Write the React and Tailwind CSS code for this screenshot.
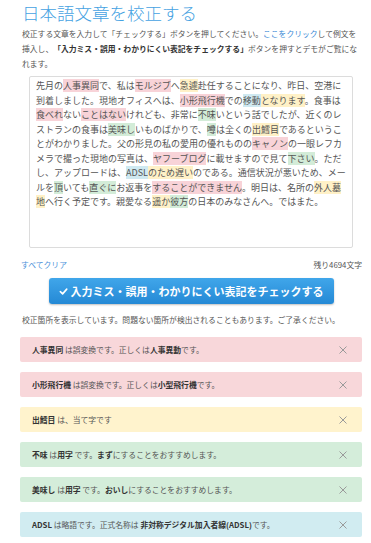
import React from "react";

const HL = {
  r: "bg-[#f8d3d8]",
  y: "bg-[#fff1c7]",
  g: "bg-[#d3ecd8]",
  b: "bg-[#cfe9f1]",
};

// sample text, one array per rendered line: [text, highlight?]
const lines = [
  [["先月の"], ["人事異同", "r"], ["で、私は"], ["モルジブ", "r"], ["へ"], ["急遽", "y"], ["赴任することになり、昨日、空港に"]],
  [["到着しました。現地オフィスへは、"], ["小形飛行機", "r"], ["での"], ["移動", "b"], ["となります", "y"], ["。食事は"]],
  [["食べれ", "r"], ["ない"], ["ことはない", "r"], ["けれども、非常に"], ["不味", "g"], ["いという話でしたが、近くのレ"]],
  [["ストランの食事は"], ["美味し", "g"], ["いものばかりで、"], ["噂", "g"], ["は全くの"], ["出鱈目", "y"], ["であるというこ"]],
  [["とがわかりました。父の形見の私の愛用の優れものの"], ["キャノン", "r"], ["の一眼レフカ"]],
  [["メラで撮った現地の写真は、"], ["ヤフーブログ", "r"], ["に載せますので見て"], ["下さい", "g"], ["。ただ"]],
  [["し、アップロードは、"], ["ADSL", "b"], ["のため遅い", "y"], ["のである。通信状況が悪いため、メー"]],
  [["ルを"], ["頂", "g"], ["いても"], ["直ぐに", "g"], ["お返事を"], ["することができません", "r"], ["。明日は、名所の"], ["外人墓", "y"]],
  [["地", "y"], ["へ行く予定です。親愛なる"], ["遥か", "y"], ["彼方", "g"], ["の日本のみなさんへ。ではまた。"]],
];

const alerts = [
  { c: "bg-[#f8d7da]", body: <><b className="text-[#333]">人事異同</b> は誤変換です。正しくは<b className="text-[#333]">人事異動</b>です。</> },
  { c: "bg-[#f8d7da]", body: <><b className="text-[#333]">小形飛行機</b> は誤変換です。正しくは<b className="text-[#333]">小型飛行機</b>です。</> },
  { c: "bg-[#fff3cd]", body: <><b className="text-[#333]">出鱈目</b> は、当て字です</> },
  { c: "bg-[#d4edda]", body: <><b className="text-[#333]">不味</b> は<b className="text-[#333]">用字</b> です。<b className="text-[#333]">まず</b>にすることをおすすめします。</> },
  { c: "bg-[#d4edda]", body: <><b className="text-[#333]">美味し</b> は<b className="text-[#333]">用字</b> です。<b className="text-[#333]">おいし</b>にすることをおすすめします。</> },
  { c: "bg-[#d1ecf1]", body: <><b className="text-[#333]">ADSL</b> は略語です。正式名称は <b className="text-[#333]">非対称デジタル加入者線(ADSL)</b>です。</> },
];

function CloseIcon() {
  return (
    <svg width="8" height="8" viewBox="0 0 8 8" className="shrink-0">
      <path d="M0.5 0.5 L7.5 7.5 M7.5 0.5 L0.5 7.5" stroke="#9a9a9a" strokeWidth="1" />
    </svg>
  );
}

export default function App() {
  return (
    <div
      className="w-[371px] min-h-[543px] bg-white pl-[20px] pr-[9px] text-[#555]"
      style={{ fontFamily: "'Noto Sans CJK JP', 'Noto Sans', sans-serif" }}
    >
      <h1 className="h-[26px] leading-[26px] text-[17.5px] font-light text-[#45a2e2] pl-[2px]">
        日本語文章を校正する
      </h1>

      <div className="text-[7.8px] leading-[15px] pl-[2px] text-[#555]">
        <div>
          校正する文章を入力して「チェックする」ボタンを押してください。
          <span className="text-[#3a8ad6]">ここをクリック</span>して例文を
        </div>
        <div>
          挿入し、<b className="text-[#333]">「入力ミス・誤用・わかりにくい表記をチェックする」</b>ボタンを押すとデモがご覧にな
        </div>
        <div>れます。</div>
      </div>

      <div className="mt-[5px] mx-[9px] h-[172px] border border-[#dcdcdc] rounded-[2px] pl-[6px] pt-[2px] text-[9px] leading-[14.5px] text-[#555]">
        {lines.map((line, i) => (
          <div key={i} className="whitespace-nowrap">
            {line.map(([t, h], j) =>
              h ? (
                <span key={j} className={HL[h]}>
                  {t}
                </span>
              ) : (
                <span key={j}>{t}</span>
              )
            )}
          </div>
        ))}
      </div>

      <div className="mt-[10px] flex justify-between text-[7.8px] leading-[14px] pl-[1px]">
        <span className="text-[#4a90d9]">すべてクリア</span>
        <span className="text-[#555]">残り4694文字</span>
      </div>

      <div className="mt-[6px] flex justify-center">
        <button className="w-[285px] h-[26px] rounded-[3px] bg-gradient-to-b from-[#40a6ea] to-[#2489d5] shadow-[0_1px_2px_rgba(0,0,0,0.25)] text-white text-[11px] font-bold flex items-center justify-center gap-[3px]">
          <svg width="9" height="9" viewBox="0 0 10 10">
            <path d="M1.5 5.2 L4 7.6 L8.6 2.4" stroke="white" strokeWidth="1.8" fill="none" strokeLinecap="round" strokeLinejoin="round" />
          </svg>
          入力ミス・誤用・わかりにくい表記をチェックする
        </button>
      </div>

      <p className="mt-[9px] text-[7.8px] leading-[14px] pl-[2px] text-[#555]">
        校正箇所を表示しています。問題ない箇所が検出されることもあります。ご了承ください。
      </p>

      <div className="mt-[10px] flex flex-col gap-[10px]">
        {alerts.map((a, i) => (
          <div
            key={i}
            className={`${a.c} h-[25px] rounded-[2px] pl-[12px] pr-[15px] flex items-center justify-between text-[7.8px] text-[#555]`}
          >
            <span>{a.body}</span>
            <CloseIcon />
          </div>
        ))}
      </div>
    </div>
  );
}
